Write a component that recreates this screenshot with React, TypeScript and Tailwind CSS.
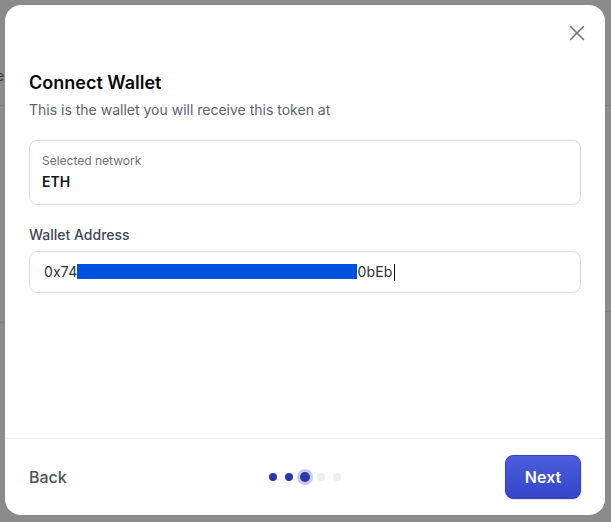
import { X } from "lucide-react";

const STEPS = 5;
const CURRENT_STEP = 2;

function StepDots() {
  return (
    <div className="flex items-center justify-self-center">
      {Array.from({ length: STEPS }).map((_, i) => (
        <span key={i} className="flex w-4 items-center justify-center">
          {i === CURRENT_STEP ? (
            <span className="h-[10px] w-[10px] rounded-full bg-[#2a38a8] ring-[3px] ring-[#cbc7f8]" />
          ) : (
            <span
              className={
                i < CURRENT_STEP
                  ? "h-2 w-2 rounded-full bg-[#2a38a8]"
                  : "h-2 w-2 rounded-full bg-[#eceef2]"
              }
            />
          )}
        </span>
      ))}
    </div>
  );
}

export default function App() {
  return (
    <div className="relative h-[522px] w-[611px] overflow-hidden bg-[#8b8b8b] font-['Inter',sans-serif]">
      {/* page underneath the dimmed overlay */}
      <span className="absolute left-[-4px] top-[66px] text-sm text-[#3a3a3a]">e</span>
      <div className="absolute left-0 top-[105px] h-px w-full bg-[#7f7f7f]" />
      <div className="absolute left-0 top-[322px] h-px w-[20px] bg-[#7f7f7f]" />
      <div className="absolute right-0 top-[311px] h-px w-[20px] bg-[#7f7f7f]" />

      <div className="absolute left-[5px] top-[5px] flex h-[510px] w-[600px] flex-col rounded-2xl bg-white">
        <div className="mt-[14px] flex h-7 justify-end pr-[14px]">
          <button className="flex h-7 w-7 items-center justify-center text-[#71757d]">
            <X size={26} strokeWidth={1.4} />
          </button>
        </div>

        <div className="flex-1 px-6">
          <h2 className="mt-[22px] text-lg font-semibold leading-7 text-[#0b0b0f]">Connect Wallet</h2>
          <p className="mt-[3px] text-sm leading-5 text-[#5b6270]">
            This is the wallet you will receive this token at
          </p>

          <div className="mt-5 rounded-lg border border-[#d9dbe1] px-3 pb-3 pt-3">
            <p className="text-xs leading-4 text-[#6a707c]">Selected network</p>
            <p className="mt-[3px] text-sm font-semibold leading-5 text-[#111318]">ETH</p>
          </div>

          <label className="mt-5 block text-sm font-medium leading-5 text-[#3f4654]">Wallet Address</label>
          <div className="mt-1.5 flex h-[42px] items-center rounded-lg border border-[#d9dbe1] px-[14px] text-sm tracking-[0.2px] text-[#2b2f36]">
            <span>0x74</span>
            <span className="mb-px inline-block h-[15px] w-[280px] bg-[#0050e0]" />
            <span>0bEb</span>
            <span className="ml-px inline-block h-[17px] w-px bg-[#111]" />
          </div>
        </div>

        <div className="grid grid-cols-3 items-center border-t border-[#eceef1] px-6 py-4">
          <button className="justify-self-start text-base font-medium text-[#4b5361]">Back</button>
          <StepDots />
          <button className="h-11 w-[76px] justify-self-end rounded-lg border border-[#3343c0] bg-gradient-to-b from-[#4b5ddb] to-[#3545cb] text-base font-semibold text-white shadow-sm">
            Next
          </button>
        </div>
      </div>
    </div>
  );
}
